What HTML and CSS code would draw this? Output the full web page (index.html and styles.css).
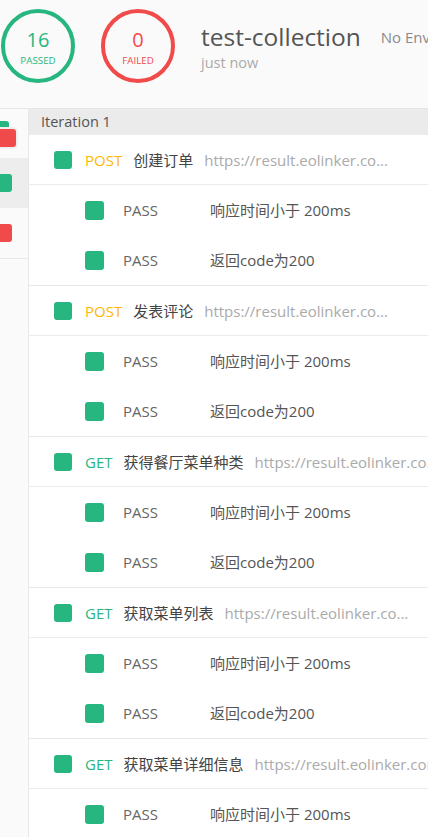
FILE: index.html
```html
<!DOCTYPE html>
<html lang="zh">
<head>
<meta charset="utf-8">
<title>test-collection</title>
<link rel="stylesheet" href="styles.css">
</head>
<body>
<div class="page">
  <header class="header">
    <div class="circle passed">
      <div class="num">16</div>
      <div class="label">PASSED</div>
    </div>
    <div class="circle failed">
      <div class="num">0</div>
      <div class="label">FAILED</div>
    </div>
    <div class="info">
      <div class="title-row">
        <span class="title">test-collection</span>
        <span class="env">No Environment</span>
      </div>
      <div class="time">just now</div>
    </div>
  </header>
  <div class="content">
    <aside class="sidebar">
      <div class="side-item stack">
        <span class="sq green back"></span>
        <span class="sq red front"></span>
      </div>
      <div class="side-item active"><span class="sq green"></span></div>
      <div class="side-item last"><span class="sq red"></span></div>
    </aside>
    <main class="main">
      <div class="iter-head">Iteration 1</div>

      <div class="group">
        <div class="req-row"><span class="rsq"></span><span class="method post">POST</span><span class="name">创建订单</span><span class="url">https://result.eolinker.co...</span></div>
        <div class="pass-row"><span class="psq"></span><span class="pass">PASS</span><span class="desc">响应时间小于 200ms</span></div>
        <div class="pass-row"><span class="psq"></span><span class="pass">PASS</span><span class="desc">返回code为200</span></div>
      </div>

      <div class="group">
        <div class="req-row"><span class="rsq"></span><span class="method post">POST</span><span class="name">发表评论</span><span class="url">https://result.eolinker.co...</span></div>
        <div class="pass-row"><span class="psq"></span><span class="pass">PASS</span><span class="desc">响应时间小于 200ms</span></div>
        <div class="pass-row"><span class="psq"></span><span class="pass">PASS</span><span class="desc">返回code为200</span></div>
      </div>

      <div class="group">
        <div class="req-row"><span class="rsq"></span><span class="method get">GET</span><span class="name">获得餐厅菜单种类</span><span class="url">https://result.eolinker.co...</span></div>
        <div class="pass-row"><span class="psq"></span><span class="pass">PASS</span><span class="desc">响应时间小于 200ms</span></div>
        <div class="pass-row"><span class="psq"></span><span class="pass">PASS</span><span class="desc">返回code为200</span></div>
      </div>

      <div class="group">
        <div class="req-row"><span class="rsq"></span><span class="method get">GET</span><span class="name">获取菜单列表</span><span class="url">https://result.eolinker.co...</span></div>
        <div class="pass-row"><span class="psq"></span><span class="pass">PASS</span><span class="desc">响应时间小于 200ms</span></div>
        <div class="pass-row"><span class="psq"></span><span class="pass">PASS</span><span class="desc">返回code为200</span></div>
      </div>

      <div class="group">
        <div class="req-row"><span class="rsq"></span><span class="method get">GET</span><span class="name">获取菜单详细信息</span><span class="url">https://result.eolinker.com</span></div>
        <div class="pass-row"><span class="psq"></span><span class="pass">PASS</span><span class="desc">响应时间小于 200ms</span></div>
        <div class="pass-row"><span class="psq"></span><span class="pass">PASS</span><span class="desc">返回code为200</span></div>
      </div>
    </main>
  </div>
</div>
</body>
</html>
```

FILE: styles.css
```css
html, body {
  margin: 0;
  padding: 0;
  overflow: hidden;
  background: #ffffff;
}

body {
  font-family: "Open Sans", "Noto Sans CJK SC", sans-serif;
  width: 428px;
  height: 837px;
}

.page {
  width: 428px;
  height: 837px;
  overflow: hidden;
}

/* ---------- header ---------- */
.header {
  box-sizing: border-box;
  height: 109px;
  background: #fafafa;
  border-bottom: 1px solid #e6e6e6;
  display: flex;
  align-items: flex-start;
  padding-top: 9px;
  padding-left: 1px;
  white-space: nowrap;
}

.circle {
  flex: none;
  width: 74px;
  height: 74px;
  box-sizing: border-box;
  border: 4px solid;
  border-radius: 50%;
  display: flex;
  flex-direction: column;
  align-items: center;
  justify-content: center;
  padding-top: 3px;
}

.circle + .circle {
  margin-left: 26px;
}

.circle.passed {
  border-color: #27b67f;
  color: #27b67f;
}

.circle.failed {
  border-color: #f04a4a;
  color: #f04a4a;
}

.num {
  font-size: 20px;
  line-height: 20px;
}

.label {
  font-size: 9.8px;
  line-height: 10px;
  margin-top: 6px;
}

.info {
  margin-left: 26px;
  margin-top: 11px;
  flex: none;
}

.title-row {
  display: flex;
  align-items: flex-end;
}

.title {
  font-size: 24.5px;
  color: #555555;
}

.env {
  font-size: 15px;
  color: #8a8a8a;
  margin-left: 20px;
  margin-bottom: 6px;
}

.time {
  font-size: 14.5px;
  color: #aaaaaa;
}

/* ---------- content ---------- */
.content {
  display: flex;
  height: 728px;
}

.sidebar {
  flex: none;
  width: 28px;
  background: #fafafa;
  border-right: 1px solid #e8e8e8;
}

.side-item {
  height: 50px;
  display: flex;
  align-items: center;
  overflow: hidden;
}

.side-item.stack {
  height: 49px;
  position: relative;
}

.side-item.active {
  background: #ededed;
}

.side-item.last {
  border-bottom: 1px solid #e8e8e8;
}

.sq {
  flex: none;
  width: 18px;
  height: 18px;
  border-radius: 3px;
  margin-left: -6px;
}

.sq.green {
  background: #27b67f;
}

.sq.red {
  background: #f04a4a;
}

.sq.back {
  position: absolute;
  left: -9px;
  top: 12px;
  margin: 0;
}

.sq.front {
  position: absolute;
  left: -4px;
  top: 18px;
  margin: 0;
  border: 2px solid #efefef;
  border-radius: 5px;
}

.main {
  flex: 1;
  min-width: 0;
  overflow: hidden;
  font-size: 15px;
  line-height: 20px;
  white-space: nowrap;
}

.iter-head {
  height: 26px;
  font-size: 14.5px;
  line-height: 26px;
  background: #ebebeb;
  color: #555555;
  padding-left: 12px;
}

.group {
  border-bottom: 1px solid #e8e8e8;
}

.req-row {
  height: 49px;
  border-bottom: 1px solid #ebebeb;
  display: flex;
  align-items: center;
  padding-left: 25px;
}

.rsq {
  flex: none;
  width: 18px;
  height: 18px;
  border-radius: 3px;
  background: #27b67f;
  margin-right: 13px;
}

.method.post {
  color: #ffb700;
}

.method.get {
  color: #27b67f;
}

.name {
  color: #444444;
  margin-left: 11px;
}

.url {
  color: #aaaaaa;
  margin-left: 11px;
}

.pass-row {
  height: 50px;
  display: flex;
  align-items: center;
  padding-left: 56px;
}

.psq {
  flex: none;
  width: 19px;
  height: 19px;
  border-radius: 3px;
  background: #27b67f;
  margin-right: 19px;
}

.pass {
  width: 87px;
  flex: none;
  color: #666666;
}

.desc {
  color: #555555;
}
```
